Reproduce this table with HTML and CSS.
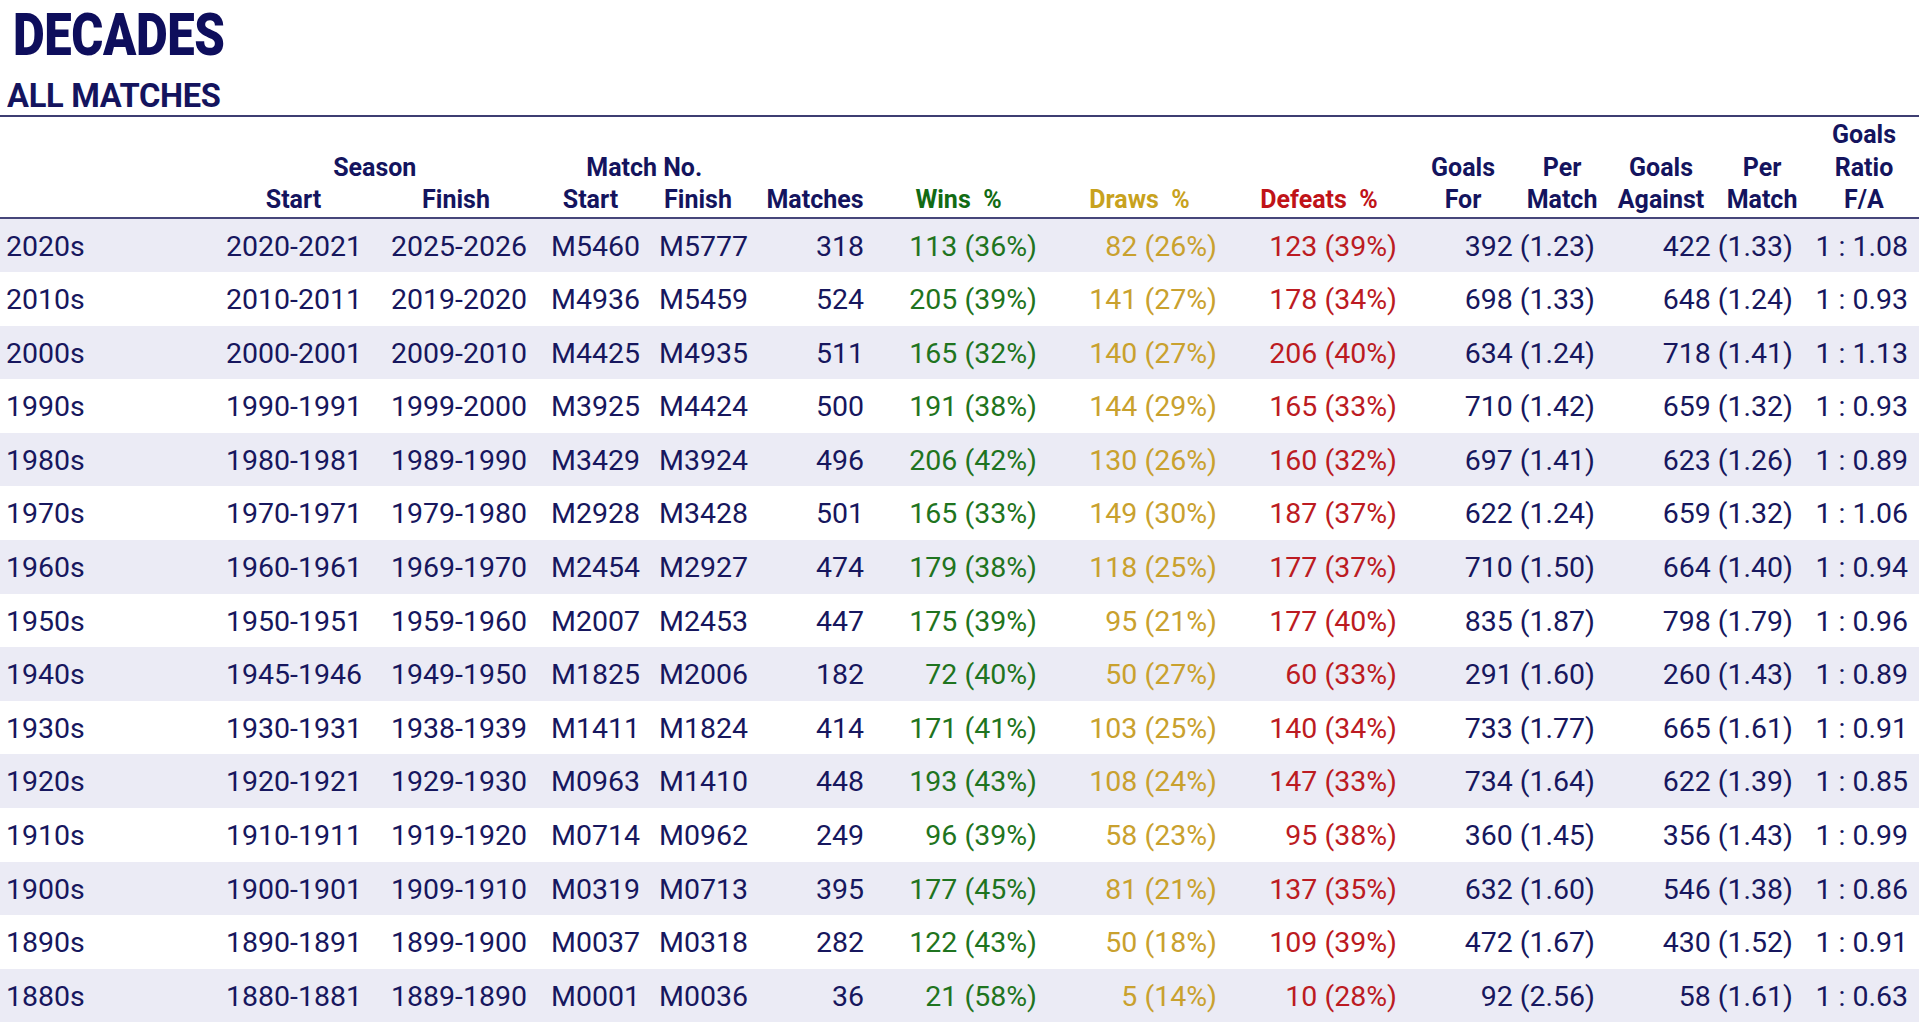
FILE: index.html
```html
<!DOCTYPE html>
<html lang="en">
<head>
<meta charset="utf-8">
<title>Decades – All Matches</title>
<link rel="stylesheet" href="styles.css">
</head>
<body>
<header class="title-block">
  <div class="page-title"><span>DECADES</span></div>
  <div class="subtitle"><span>ALL MATCHES</span></div>
</header>

<div class="thead">
  <div class="group g-season"><span>Season</span></div>
  <div class="group g-match"><span>Match No.</span></div>

  <div class="hc c2 r3"><span>Start</span></div>
  <div class="hc c3 r3"><span>Finish</span></div>
  <div class="hc c4 r3"><span>Start</span></div>
  <div class="hc c5 r3"><span>Finish</span></div>
  <div class="hc c6 r3"><span>Matches</span></div>
  <div class="hc c7 r3 win"><span>Wins  %</span></div>
  <div class="hc c8 r3 draw"><span>Draws  %</span></div>
  <div class="hc c9 r3 loss"><span>Defeats  %</span></div>
  <div class="hc c10 r23"><span>Goals</span><span>For</span></div>
  <div class="hc c11 r23"><span>Per</span><span>Match</span></div>
  <div class="hc c12 r23"><span>Goals</span><span>Against</span></div>
  <div class="hc c13 r23"><span>Per</span><span>Match</span></div>
  <div class="hc c14 r123"><span>Goals</span><span>Ratio</span><span>F/A</span></div>
</div>

<div class="tbody">
  <div class="row"><div class="dec">2020s</div><div>2020-2021</div><div>2025-2026</div><div>M5460</div><div>M5777</div><div>318</div><div class="win">113 (36%)</div><div class="draw">82 (26%)</div><div class="loss">123 (39%)</div><div>392 (1.23)</div><div>422 (1.33)</div><div>1 : 1.08</div></div>
  <div class="row"><div class="dec">2010s</div><div>2010-2011</div><div>2019-2020</div><div>M4936</div><div>M5459</div><div>524</div><div class="win">205 (39%)</div><div class="draw">141 (27%)</div><div class="loss">178 (34%)</div><div>698 (1.33)</div><div>648 (1.24)</div><div>1 : 0.93</div></div>
  <div class="row"><div class="dec">2000s</div><div>2000-2001</div><div>2009-2010</div><div>M4425</div><div>M4935</div><div>511</div><div class="win">165 (32%)</div><div class="draw">140 (27%)</div><div class="loss">206 (40%)</div><div>634 (1.24)</div><div>718 (1.41)</div><div>1 : 1.13</div></div>
  <div class="row"><div class="dec">1990s</div><div>1990-1991</div><div>1999-2000</div><div>M3925</div><div>M4424</div><div>500</div><div class="win">191 (38%)</div><div class="draw">144 (29%)</div><div class="loss">165 (33%)</div><div>710 (1.42)</div><div>659 (1.32)</div><div>1 : 0.93</div></div>
  <div class="row"><div class="dec">1980s</div><div>1980-1981</div><div>1989-1990</div><div>M3429</div><div>M3924</div><div>496</div><div class="win">206 (42%)</div><div class="draw">130 (26%)</div><div class="loss">160 (32%)</div><div>697 (1.41)</div><div>623 (1.26)</div><div>1 : 0.89</div></div>
  <div class="row"><div class="dec">1970s</div><div>1970-1971</div><div>1979-1980</div><div>M2928</div><div>M3428</div><div>501</div><div class="win">165 (33%)</div><div class="draw">149 (30%)</div><div class="loss">187 (37%)</div><div>622 (1.24)</div><div>659 (1.32)</div><div>1 : 1.06</div></div>
  <div class="row"><div class="dec">1960s</div><div>1960-1961</div><div>1969-1970</div><div>M2454</div><div>M2927</div><div>474</div><div class="win">179 (38%)</div><div class="draw">118 (25%)</div><div class="loss">177 (37%)</div><div>710 (1.50)</div><div>664 (1.40)</div><div>1 : 0.94</div></div>
  <div class="row"><div class="dec">1950s</div><div>1950-1951</div><div>1959-1960</div><div>M2007</div><div>M2453</div><div>447</div><div class="win">175 (39%)</div><div class="draw">95 (21%)</div><div class="loss">177 (40%)</div><div>835 (1.87)</div><div>798 (1.79)</div><div>1 : 0.96</div></div>
  <div class="row"><div class="dec">1940s</div><div>1945-1946</div><div>1949-1950</div><div>M1825</div><div>M2006</div><div>182</div><div class="win">72 (40%)</div><div class="draw">50 (27%)</div><div class="loss">60 (33%)</div><div>291 (1.60)</div><div>260 (1.43)</div><div>1 : 0.89</div></div>
  <div class="row"><div class="dec">1930s</div><div>1930-1931</div><div>1938-1939</div><div>M1411</div><div>M1824</div><div>414</div><div class="win">171 (41%)</div><div class="draw">103 (25%)</div><div class="loss">140 (34%)</div><div>733 (1.77)</div><div>665 (1.61)</div><div>1 : 0.91</div></div>
  <div class="row"><div class="dec">1920s</div><div>1920-1921</div><div>1929-1930</div><div>M0963</div><div>M1410</div><div>448</div><div class="win">193 (43%)</div><div class="draw">108 (24%)</div><div class="loss">147 (33%)</div><div>734 (1.64)</div><div>622 (1.39)</div><div>1 : 0.85</div></div>
  <div class="row"><div class="dec">1910s</div><div>1910-1911</div><div>1919-1920</div><div>M0714</div><div>M0962</div><div>249</div><div class="win">96 (39%)</div><div class="draw">58 (23%)</div><div class="loss">95 (38%)</div><div>360 (1.45)</div><div>356 (1.43)</div><div>1 : 0.99</div></div>
  <div class="row"><div class="dec">1900s</div><div>1900-1901</div><div>1909-1910</div><div>M0319</div><div>M0713</div><div>395</div><div class="win">177 (45%)</div><div class="draw">81 (21%)</div><div class="loss">137 (35%)</div><div>632 (1.60)</div><div>546 (1.38)</div><div>1 : 0.86</div></div>
  <div class="row"><div class="dec">1890s</div><div>1890-1891</div><div>1899-1900</div><div>M0037</div><div>M0318</div><div>282</div><div class="win">122 (43%)</div><div class="draw">50 (18%)</div><div class="loss">109 (39%)</div><div>472 (1.67)</div><div>430 (1.52)</div><div>1 : 0.91</div></div>
  <div class="row"><div class="dec">1880s</div><div>1880-1881</div><div>1889-1890</div><div>M0001</div><div>M0036</div><div>36</div><div class="win">21 (58%)</div><div class="draw">5 (14%)</div><div class="loss">10 (28%)</div><div>92 (2.56)</div><div>58 (1.61)</div><div>1 : 0.63</div></div>
</div>
</body>
</html>
```

FILE: styles.css
```css
html, body {
  margin: 0;
  padding: 0;
  background: #ffffff;
}

body {
  font-family: Roboto, "Liberation Sans", Arial, sans-serif;
  color: #17175e;
  overflow: hidden;
}

/* ---------- Title ---------- */
.title-block {
  padding: 5px 0 3px 0;
  border-bottom: 2px solid #3e3e72;
}

.page-title {
  height: 59px;
  padding-left: 13px;
  font-size: 59px;
  line-height: 59px;
  font-weight: 900;
  color: #0e0e5c;
}

.page-title span {
  display: inline-block;
  transform: scaleX(0.83);
  transform-origin: left center;
  letter-spacing: -0.5px;
}

.subtitle {
  margin-top: 14px;
  height: 34px;
  padding-left: 7px;
  font-size: 34px;
  line-height: 34px;
  font-weight: 700;
  color: #14145e;
}

.subtitle span {
  display: inline-block;
  transform: scaleX(0.96);
  transform-origin: left center;
  letter-spacing: -0.3px;
}

/* ---------- Header ---------- */
.thead {
  display: grid;
  grid-template-columns: 293.5px 162.5px 134.5px 107.5px 117px 143.5px 181px 179.5px 144px 99px 99px 101px 102px 1fr;
  grid-template-rows: 32.5px 32.5px 32.5px;
  padding-top: 2px;
  border-bottom: 2px solid #46467a;
  font-size: 25px;
  line-height: 32.5px;
  font-weight: 700;
  color: #14145e;
}

/* group label centred across its column track */
.group {
  grid-row: 2;
  display: flex;
  justify-content: center;
  white-space: nowrap;
}

.g-season { grid-column: 2; }
.g-match  { grid-column: 4; }

/* header label centred on the start line of its column */
.hc {
  justify-self: start;
  align-self: end;
  width: 0;
  display: flex;
  flex-direction: column;
  align-items: center;
  white-space: pre;
}

.c2  { grid-column: 2; }
.c3  { grid-column: 3; }
.c4  { grid-column: 4; }
.c5  { grid-column: 5; }
.c6  { grid-column: 6; }
.c7  { grid-column: 7; }
.c8  { grid-column: 8; }
.c9  { grid-column: 9; }
.c10 { grid-column: 10; }
.c11 { grid-column: 11; }
.c12 { grid-column: 12; }
.c13 { grid-column: 13; }
.c14 { grid-column: 14; }

.r3   { grid-row: 3; }
.r23  { grid-row: 2 / 4; }
.r123 { grid-row: 1 / 4; }

.thead .win  { color: #126b14; }
.thead .draw { color: #c8a21e; }
.thead .loss { color: #c01318; }

/* ---------- Body ---------- */
.row {
  display: grid;
  grid-template-columns: 200px 162px 165px 113px 108px 116px 173px 180px 180px 198px 198px 115px 1fr;
  height: 53.6px;
  box-sizing: border-box;
  padding-top: 3px;
  font-size: 28.5px;
  line-height: 50.6px;
  text-align: right;
  color: #17175e;
  white-space: nowrap;
}

.row:nth-child(odd) {
  background: #ebebf5;
}

.row .dec {
  text-align: left;
  padding-left: 6px;
}

.row .win  { color: #1f7420; }
.row .draw { color: #c9a12e; }
.row .loss { color: #bc1b22; }
```
